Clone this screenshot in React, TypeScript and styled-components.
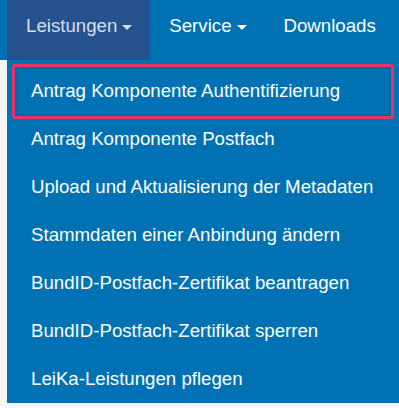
import React from "react";
import styled, { createGlobalStyle } from "styled-components";

const colors = {
  Blue: "#0072b3",
  BlueDark: "#24528f",
  Focus: "#e8336a",
  Page: "#f6f6f6",
  Text: "#ffffff",
  TextMuted: "#d9dee8",
};

const GlobalStyle = createGlobalStyle`
  html, body {
    margin: 0;
    padding: 0;
    background: ${colors.Page};
    font-family: "Liberation Sans", Arial, sans-serif;
    overflow: hidden;
  }
`;

const PageS = styled.div`
  position: relative;
  width: 399px;
  height: 408px;
  overflow: hidden;
`;

const NavBarS = styled.nav`
  display: flex;
  height: 60px;
  padding-left: 7px;
  background: ${colors.Blue};
`;

const NavItemS = styled.div<{ active?: boolean }>`
  display: flex;
  align-items: flex-start;
  padding: 15px 18px 0 19px;
  background: ${(props) => (props.active ? colors.BlueDark : "transparent")};
  color: ${(props) => (props.active ? colors.TextMuted : colors.Text)};
  font-size: 18.67px;
  white-space: nowrap;
  cursor: pointer;
`;

const CaretS = styled.span`
  display: inline-block;
  margin: 10px 0 0 5px;
  width: 0;
  height: 0;
  border-left: 5px solid transparent;
  border-right: 5px solid transparent;
  border-top: 5px solid currentColor;
`;

const DropDownS = styled.ul`
  position: absolute;
  top: 60px;
  left: 7px;
  width: 392px;
  margin: 0;
  padding: 7px 0 0;
  list-style: none;
  background: ${colors.Blue};
`;

const DropDownItemS = styled.li<{ focused?: boolean }>`
  position: relative;
  padding: 12px 24px;
  line-height: 24px;
  font-size: 18.67px;
  color: ${colors.Text};
  white-space: nowrap;

  &::after {
    content: "";
    display: ${(props) => (props.focused ? "block" : "none")};
    position: absolute;
    top: -3px;
    bottom: -4px;
    left: 5px;
    right: 5px;
    border: 3px solid ${colors.Focus};
    border-radius: 3px;
    box-shadow: inset 0 0 4px rgba(0, 0, 0, 0.25);
  }
`;

const items = [
  "Antrag Komponente Authentifizierung",
  "Antrag Komponente Postfach",
  "Upload und Aktualisierung der Metadaten",
  "Stammdaten einer Anbindung ändern",
  "BundID-Postfach-Zertifikat beantragen",
  "BundID-Postfach-Zertifikat sperren",
  "LeiKa-Leistungen pflegen",
];

export default function App() {
  return (
    <PageS>
      <GlobalStyle />
      <NavBarS>
        <NavItemS active>
          Leistungen
          <CaretS />
        </NavItemS>
        <NavItemS>
          Service
          <CaretS />
        </NavItemS>
        <NavItemS>Downloads</NavItemS>
      </NavBarS>
      <DropDownS>
        {items.map((item, i) => (
          <DropDownItemS key={item} focused={i === 0}>
            {item}
          </DropDownItemS>
        ))}
      </DropDownS>
    </PageS>
  );
}
